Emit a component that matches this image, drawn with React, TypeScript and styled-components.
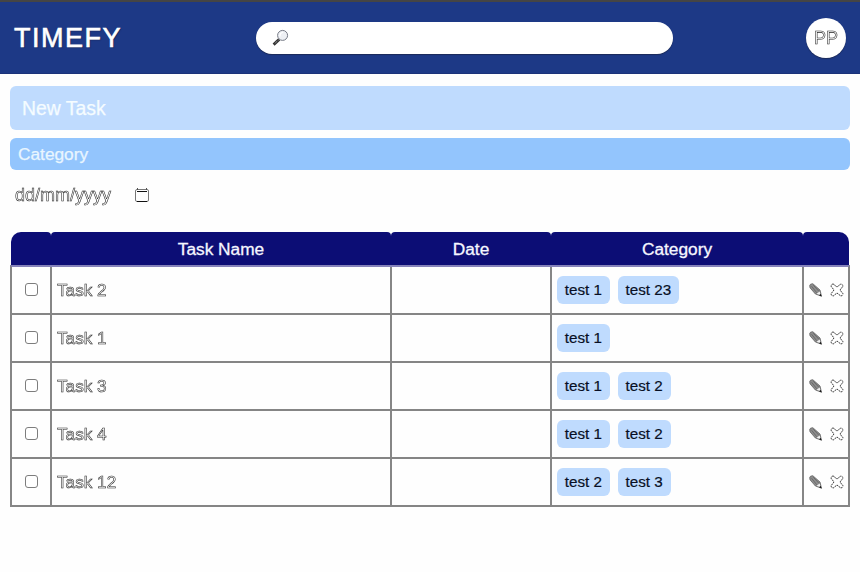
import React from 'react';
import styled, { createGlobalStyle, css } from 'styled-components';

const Global = createGlobalStyle`
  *, *::before, *::after { box-sizing: border-box; }
  html, body { margin: 0; background: #fefefe; overflow: hidden; }
  body, input, button { font-family: "Liberation Sans", Arial, sans-serif; }
`;

const outlined = css`
  color: #fff;
  -webkit-text-stroke: 0.55px #1c1c1c;
  will-change: transform;
`;

const Page = styled.div`
  height: 572px;
  display: flex;
  flex-direction: column;
`;

const Header = styled.header`
  height: 74px;
  flex: none;
  display: grid;
  grid-template-columns: 256px 417px 1fr;
  align-items: center;
  padding-right: 14px;
  background: #1d3986;
  border-top: 2px solid #454545;
  border-bottom: 1px solid #1b3279;
`;

const Logo = styled.h1`
  margin: 0;
  padding-left: 14px;
  font-size: 27px;
  line-height: 32px;
  font-weight: 400;
  letter-spacing: 1.5px;
  color: #fff;
  -webkit-text-stroke: 0.6px #fff;
  text-shadow: 1px 1px 1px #18295e;
`;

const Search = styled.div`
  height: 32px;
  display: flex;
  align-items: center;
  padding-left: 16px;
  border-radius: 16px;
  background: #fff;
  box-shadow: 0 1px 1px #1c2b59;
`;

const Avatar = styled.div`
  width: 40px;
  height: 40px;
  justify-self: end;
  border-radius: 50%;
  background: #fff;
  box-shadow: 0 1px 1px #1c2b59;
  text-align: center;
  line-height: 40px;
  font-size: 18px;
  ${outlined}
`;

const Main = styled.main`
  display: flex;
  flex-direction: column;
  padding: 12px 10px 0;
`;

const Field = styled.input<{ $large?: boolean }>`
  width: 100%;
  height: ${p => (p.$large ? 44 : 32)}px;
  margin: 0 0 8px;
  padding: 0 ${p => (p.$large ? 12 : 8)}px;
  border: 0;
  border-radius: 6px;
  outline: 0;
  background: ${p => (p.$large ? '#bfdbfe' : '#93c5fd')};
  font-size: ${p => (p.$large ? 19.4 : 17.3)}px;
  &::placeholder {
    color: ${p => (p.$large ? '#f5fcff' : '#e9f6ff')};
    -webkit-text-stroke: 0.25px ${p => (p.$large ? '#f5fcff' : '#e9f6ff')};
    opacity: 1;
  }
`;

const DateField = styled.div`
  width: 139px;
  height: 34px;
  margin-bottom: 20px;
  padding-left: 5px;
  display: flex;
  align-items: center;
  justify-content: space-between;
  font-size: 18px;
`;

const DateText = styled.span`
  line-height: 20px;
  ${outlined}
`;

const HeadRow = styled.div`
  height: 33px;
  margin: 0 1px;
  display: grid;
  grid-template-columns: 40px 340px 160px 252px 46px;
`;

const HeadCell = styled.div`
  border-radius: 4px 4px 0 0;
  background: #0c0d75;
  color: #f6f7ff;
  -webkit-text-stroke: 0.3px #f6f7ff;
  text-align: center;
  font-size: 17.3px;
  line-height: 34px;
  &:first-child { border-top-left-radius: 10px; }
  &:last-child { border-top-right-radius: 10px; }
`;

const Body = styled.div`
  border: 2px solid #868686;
  border-top-color: #8582ba;
  border-bottom: 0;
`;

const Row = styled.div`
  height: 48px;
  display: grid;
  grid-template-columns: 40px 340px 160px 252px 44px;
  border-bottom: 2px solid #858585;
`;

const Cell = styled.div`
  display: flex;
  align-items: center;
  padding: 0 5px;
  border-right: 2px solid #868686;
  &:last-child { border-right: 0; }
`;

const CheckCell = styled(Cell)`
  justify-content: center;
  padding: 0 0 1px;
`;

const Check = styled.input`
  margin: 0;
  width: 13px;
  height: 13px;
  appearance: none;
  border: 1px solid #7d7d7d;
  border-radius: 3px;
  background: #fff;
`;

const TaskName = styled.span`
  font-size: 17.2px;
  line-height: 20px;
  ${outlined}
`;

const Tags = styled(Cell)`
  gap: 8px;
`;

const Tag = styled.span`
  height: 28px;
  padding: 0 7.8px;
  border-radius: 6px;
  background: #bfdbfe;
  color: #080f24;
  -webkit-text-stroke: 0.2px #080f24;
  font-size: 15.2px;
  line-height: 28px;
  white-space: pre;
`;

const Actions = styled(Cell)`
  gap: 7px;
  padding: 0 0 0 5px;
`;

const Action = styled.button`
  width: 14px;
  height: 14px;
  padding: 0;
  border: 0;
  background: none;
  svg { display: block; }
`;

const SearchIcon = () => (
  <svg width="18" height="18" viewBox="0 0 18 18" fill="none">
    <path d="M7.2 10.4 L1.6 15.6" stroke="#303030" strokeWidth="2.8" />
    <path d="M6.5 11 L2.5 14.7" stroke="#ddd" strokeWidth=".8" strokeDasharray="1 1" />
    <circle cx="10.6" cy="6.4" r="5" fill="#eef0f4" stroke="#777b86" />
    <path d="M8.2 7.5a3 3 0 0 1 3-4" stroke="#fff" strokeWidth="1.2" />
  </svg>
);

const CalendarIcon = () => (
  <svg width="14" height="16" viewBox="0 0 14 16" fill="none">
    <rect x=".5" y="2.5" width="13" height="12" rx="1.5" stroke="#777" />
    <path d="M2 4.5h10M2 14.5h10" stroke="#111" />
    <path d="M2.5 1v2M11.5 1v2" stroke="#555" />
  </svg>
);

const PencilIcon = () => (
  <svg width="14" height="14" viewBox="0 0 14 14">
    <path d="M.7 2.6 Q1 .6 3.8 .7 L11 7 L12.5 13.2 L6.4 11 L1 4.8Z" fill="#8d8d8d" stroke="#555" strokeWidth=".7" />
    <path d="M2.6 3.3 L7.8 9.8 M4.3 2.2 L9.8 8.2" stroke="#5a5a5a" strokeWidth=".7" />
    <path d="M7.6 10.8 L10.7 8.5 L11.6 12.2Z" fill="#f2f2f2" />
    <path d="M10.2 12.2 L11.6 10.8 L12.6 13.4Z" fill="#111" />
  </svg>
);

const CrossIcon = () => (
  <svg width="14" height="14" viewBox="0 0 14 14">
    <path
      d="M3.2 1 L7 4 L10.8 1 Q12.7 1.3 13 3.2 L10 7 L13 10.8 Q12.7 12.8 10.8 13 L7 10 L3.2 13 Q1.3 12.8 1 10.8 L4 7 L1 3.2 Q1.3 1.2 3.2 1Z"
      fill="#fff"
      stroke="#222"
      strokeWidth=".9"
      strokeDasharray="1.9 .7"
    />
  </svg>
);

const tasks = [
  { name: 'Task 2', tags: ['test 1', 'test 23'] },
  { name: 'Task 1', tags: ['test 1'] },
  { name: 'Task 3', tags: ['test 1', 'test 2'] },
  { name: 'Task 4', tags: ['test 1', 'test 2'] },
  { name: 'Task 12', tags: ['test 2', 'test 3'] },
];

export default function App() {
  return (
    <Page>
      <Global />
      <Header>
        <Logo>TIMEFY</Logo>
        <Search><SearchIcon /></Search>
        <Avatar>PP</Avatar>
      </Header>
      <Main>
        <Field $large placeholder="New Task" />
        <Field placeholder="Category" />
        <DateField>
          <DateText>dd/mm/yyyy</DateText>
          <CalendarIcon />
        </DateField>
        <HeadRow>
          {['', 'Task Name', 'Date', 'Category', ''].map((label, i) => (
            <HeadCell key={i}>{label}</HeadCell>
          ))}
        </HeadRow>
        <Body>
          {tasks.map(task => (
            <Row key={task.name}>
              <CheckCell><Check type="checkbox" aria-label={task.name} /></CheckCell>
              <Cell><TaskName>{task.name}</TaskName></Cell>
              <Cell />
              <Tags>{task.tags.map(tag => <Tag key={tag}>{tag}</Tag>)}</Tags>
              <Actions>
                <Action aria-label="Edit"><PencilIcon /></Action>
                <Action aria-label="Delete"><CrossIcon /></Action>
              </Actions>
            </Row>
          ))}
        </Body>
      </Main>
    </Page>
  );
}
